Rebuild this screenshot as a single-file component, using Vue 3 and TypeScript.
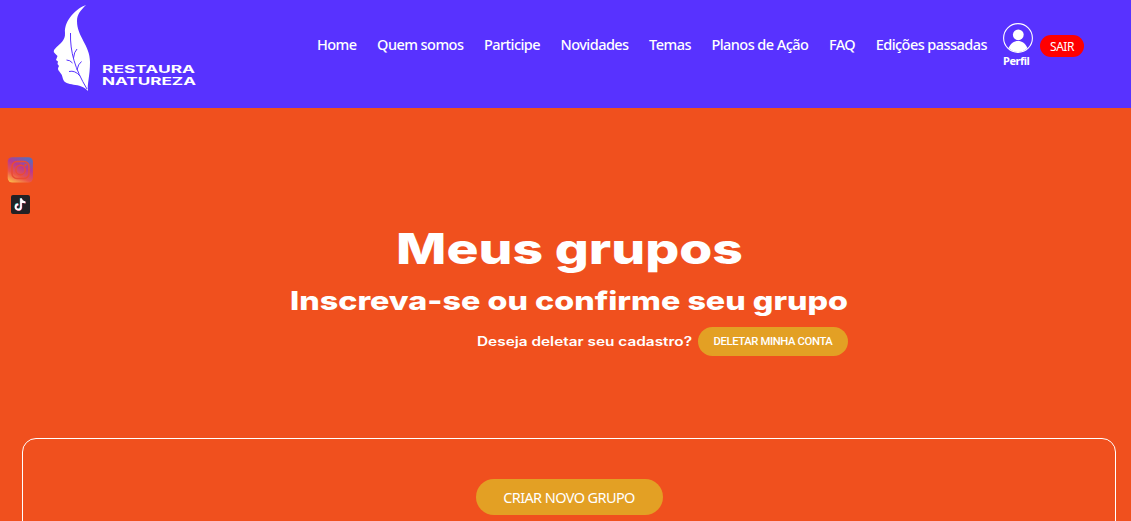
<template>
  <div class="page">
    <header class="header">
      <a href="#" class="logo" aria-label="Restaura Natureza">
        <svg width="150" height="94" viewBox="0 0 150 94">
          <path
            class="leaf"
            d="M36 5C27 8 14 20 15 33C15.500 41 10 43 4 50Q3 52 5 53.500L7.500 56L6 60L8 61.500L7.500 64L9 66Q7 69 9 71Q12 74 13 79C15 87 31 82 38 91C37 84 40 76 40 62C40 45 27 37 27 21C27 14 31 10 36 5Z"
          />
          <path
            class="vein"
            d="M20.500 33C20 52 25 69 37 89M23.500 58Q24 52 27 49M22.500 63Q20 60 16.500 60M27 70Q28 64 31.500 61.500M30 76Q25 70 19 71.500"
          />
          <text x="52" y="73" textLength="93" lengthAdjust="spacingAndGlyphs">RESTAURA</text>
          <text x="52" y="84.500" textLength="94" lengthAdjust="spacingAndGlyphs">NATUREZA</text>
        </svg>
      </a>

      <nav class="menu">
        <a v-for="item in menuItems" :key="item" href="#">{{ item }}</a>
      </nav>

      <a href="#" class="profile">
        <svg width="30" height="30" viewBox="0 0 30 30">
          <circle cx="15" cy="15" r="14.400" fill="none" stroke="#fff" stroke-width="1.100" />
          <circle cx="15.300" cy="11.800" r="5.400" fill="#fff" />
          <path d="M5.600 25C7.500 20.500 11 18 15 18S22.500 20.500 24.400 25Q20.500 29 15 29T5.600 25Z" fill="#fff" />
        </svg>
        <span>Perfil</span>
      </a>
      <button type="button" class="logout">SAIR</button>
    </header>

    <main class="content">
      <h1 class="heading title">
        <svg width="350" height="52">
          <text x="2" y="37" textLength="347" lengthAdjust="spacingAndGlyphs">Meus grupos</text>
        </svg>
      </h1>
      <div class="intro">
        <h2 class="heading subtitle">
          <svg width="560" height="34">
            <text x="0" y="24" textLength="558" lengthAdjust="spacingAndGlyphs">Inscreva-se ou confirme seu grupo</text>
          </svg>
        </h2>
        <div class="delete-row">
          <span class="heading question">
            <svg width="216" height="20">
              <text x="0" y="14" textLength="215" lengthAdjust="spacingAndGlyphs">Deseja deletar seu cadastro?</text>
            </svg>
          </span>
          <button type="button" class="delete-button">DELETAR MINHA CONTA</button>
        </div>
      </div>

      <section class="groups">
        <button type="button" class="create-button">CRIAR NOVO GRUPO</button>
      </section>
    </main>

    <aside class="social">
      <a href="#" aria-label="Instagram">
        <svg width="26" height="26" viewBox="0 0 26 26">
          <defs>
            <linearGradient id="insta" x1="0.200" y1="1" x2="0.700" y2="0">
              <stop offset="0" stop-color="#f9b04c" />
              <stop offset="0.300" stop-color="#ec5448" />
              <stop offset="0.650" stop-color="#b83a91" />
              <stop offset="1" stop-color="#5c6abb" />
            </linearGradient>
          </defs>
          <rect x="0.700" y="0.300" width="25.200" height="25.200" rx="4.500" fill="url(#insta)" />
          <g class="camera">
            <rect x="5" y="4.500" width="17" height="17" rx="5" />
            <circle cx="13.500" cy="13" r="4.700" />
            <circle cx="18.500" cy="8" r="0.500" />
          </g>
        </svg>
      </a>
      <a href="#" aria-label="TikTok">
        <svg width="19" height="19" viewBox="0 0 19 19">
          <rect width="19" height="19" rx="2" fill="#222125" />
          <g class="note">
            <path d="M9.600 3.200V12A2.700 2.700 0 1 1 6.900 8.900M9.600 3.200C10 5.500 11.400 6.900 14 7" stroke="#36c9cd" />
            <path d="M10.400 4V13A2.700 2.700 0 1 1 7.700 9.700M10.400 4C10.800 6.200 12.200 7.500 14.800 7.700" stroke="#ef3d67" />
            <path d="M10 3.500V12.500A2.700 2.700 0 1 1 7.300 9.300M10 3.500C10.400 5.800 11.800 7.200 14.400 7.300" stroke="#fff" />
          </g>
        </svg>
      </a>
    </aside>
  </div>
</template>

<script setup lang="ts">
const menuItems: string[] = [
  'Home',
  'Quem somos',
  'Participe',
  'Novidades',
  'Temas',
  'Planos de Ação',
  'FAQ',
  'Edições passadas'
];
</script>

<style>
body {
  margin: 0;
  overflow: hidden;
}
</style>

<style scoped>
.page {
  position: relative;
  height: 521px;
  overflow: hidden;
  background: #f0501e;
  color: #fff;
  font-family: 'Noto Sans', sans-serif;
}

a {
  color: inherit;
  text-decoration: none;
}

svg {
  display: block;
  overflow: visible;
}

button {
  border: 0;
  padding: 0;
  color: inherit;
  font-family: inherit;
  white-space: nowrap;
}

.header {
  display: flex;
  align-items: flex-start;
  box-sizing: border-box;
  height: 108px;
  padding-left: 50px;
  background: #5832ff;
}

.logo text {
  fill: #fff;
  font-family: Inter, sans-serif;
  font-size: 11px;
  font-weight: 700;
}

.leaf {
  fill: #fff;
}

.vein {
  fill: none;
  stroke: #5832ff;
  stroke-width: 1;
}

.menu {
  display: flex;
  justify-content: space-between;
  width: 670px;
  margin: 33px 0 0 117px;
  font-size: 14.5px;
  font-weight: 500;
  letter-spacing: -0.55px;
  line-height: 22px;
  white-space: nowrap;
}

.profile {
  margin: 23px 0 0 16px;
  width: 30px;
  font-size: 11px;
  font-weight: 700;
  letter-spacing: -0.45px;
  line-height: 15px;
}

.logout {
  width: 44px;
  height: 22px;
  margin: 35px 0 0 7px;
  border-radius: 11px;
  background: #f00;
  font-size: 12px;
  letter-spacing: -0.5px;
}

.content {
  display: flex;
  flex-direction: column;
  align-items: center;
  padding: 119px 15px 0 22px;
}

.heading {
  margin: 0;
  fill: #fff;
  font-family: Inter, sans-serif;
}

.title {
  font-size: 42px;
  font-weight: 800;
}

.subtitle {
  font-size: 26px;
  font-weight: 800;
}

.question {
  font-size: 12.5px;
  font-weight: 600;
}

.intro {
  width: 558px;
  margin-top: 7px;
}

.delete-row {
  display: flex;
  justify-content: flex-end;
  align-items: center;
  gap: 5px;
  margin-top: 7px;
}

.delete-button {
  width: 150px;
  height: 29px;
  border-radius: 15px;
  background: #e3a024;
  font-family: Roboto, sans-serif;
  font-size: 11.3px;
  font-weight: 500;
  letter-spacing: -0.4px;
}

.groups {
  display: flex;
  justify-content: center;
  align-items: flex-start;
  box-sizing: border-box;
  width: 100%;
  height: 200px;
  margin-top: 82px;
  padding-top: 40px;
  border: 1px solid #fff;
  border-radius: 14px;
}

.create-button {
  width: 187px;
  height: 36px;
  border-radius: 18px;
  background: #e3a024;
  font-size: 14.5px;
  letter-spacing: -0.6px;
}

.social {
  position: absolute;
  top: 157px;
  left: 7px;
  display: flex;
  flex-direction: column;
  align-items: center;
  gap: 12px;
}

.camera {
  fill: none;
  stroke: #e94b35;
  stroke-width: 1.5;
}

.note {
  fill: none;
  stroke-width: 1.7;
}
</style>
